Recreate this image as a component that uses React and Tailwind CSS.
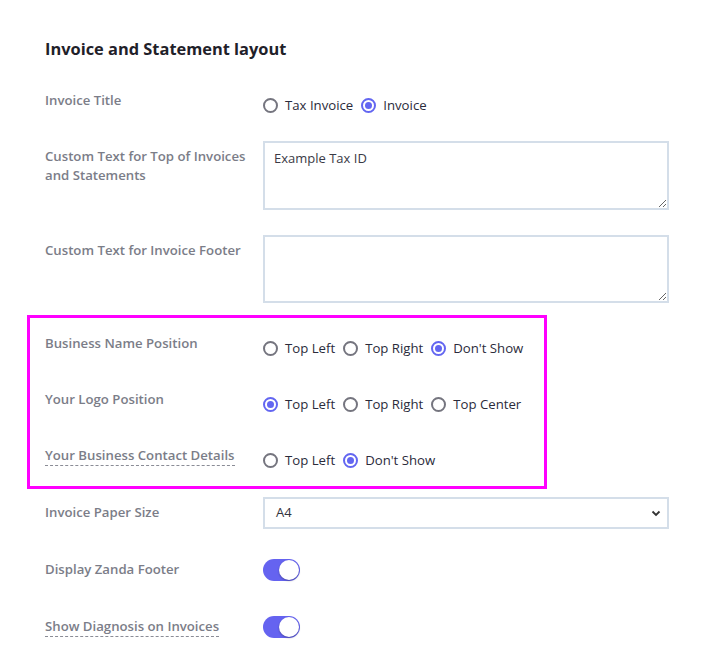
import React from "react";

const font = { fontFamily: "'Open Sans', 'Noto Sans', sans-serif" };

function Radio({ label, checked }) {
  return (
    <label className="flex items-center h-[19px] gap-[7px] mr-[8px]">
      {checked ? (
        <span className="w-[15px] h-[15px] rounded-full border-[2px] border-[#6366f1] flex items-center justify-center shrink-0">
          <span className="w-[7px] h-[7px] rounded-full bg-[#6366f1]" />
        </span>
      ) : (
        <span className="w-[15px] h-[15px] rounded-full border-[2px] border-[#75757f] shrink-0" />
      )}
      <span className="text-[13.2px] leading-[19px] text-[#2b2b3b]">{label}</span>
    </label>
  );
}

function Label({ children, dashed }) {
  return (
    <div className="w-[218px] shrink-0 pt-[6px] pr-[12px] text-[13.2px] leading-[19px] font-semibold text-[#7b7d88]">
      <span className={dashed ? "border-b border-dashed border-[#8a8c96] pb-[1px]" : ""}>
        {children}
      </span>
    </div>
  );
}

function RadioRow({ label, options, dashed }) {
  return (
    <div className="flex min-h-[31px]">
      <Label dashed={dashed}>{label}</Label>
      <div className="flex pt-[11px]">
        {options.map(([t, c]) => (
          <Radio key={t} label={t} checked={c} />
        ))}
      </div>
    </div>
  );
}

function Toggle() {
  return (
    <div className="w-[37px] h-[22px] rounded-full bg-[#6563f0] relative">
      <div className="absolute right-[1px] top-[1px] w-[20px] h-[20px] rounded-full bg-white shadow-[0_1px_2px_rgba(0,0,0,0.3)]" />
    </div>
  );
}

export default function App() {
  return (
    <div className="bg-white w-[704px] min-h-[663px] pl-[45px] pr-[35px] pt-[37px]" style={font}>
      <h2 className="text-[16.4px] leading-[24px] font-bold text-[#1f2129] mb-[24px]">
        Invoice and Statement layout
      </h2>
      <div className="flex flex-col gap-[25px]">
        <RadioRow label="Invoice Title" options={[["Tax Invoice", false], ["Invoice", true]]} />
        <div className="flex">
          <Label>Custom Text for Top of Invoices and Statements</Label>
          <textarea
            defaultValue="Example Tax ID"
            className="flex-1 h-[69px] border-[2px] border-[#d4dee9] px-[9px] py-[6px] text-[13px] leading-[19px] text-[#3a3a46] outline-none"
            style={font}
          />
        </div>
        <div className="flex">
          <Label>Custom Text for Invoice Footer</Label>
          <textarea
            className="flex-1 h-[68px] border-[2px] border-[#d4dee9] px-[9px] py-[6px] text-[13px] leading-[19px] text-[#3a3a46] outline-none"
            style={font}
          />
        </div>
        <div className="relative flex flex-col gap-[25px] mb-[1px]">
          <div className="absolute left-[-18px] top-[-13px] w-[520px] bottom-[-18px] border-[3px] border-[#ff00ff] pointer-events-none" />
          <RadioRow
            label="Business Name Position"
            options={[["Top Left", false], ["Top Right", false], ["Don't Show", true]]}
          />
          <RadioRow
            label="Your Logo Position"
            options={[["Top Left", true], ["Top Right", false], ["Top Center", false]]}
          />
          <RadioRow
            label="Your Business Contact Details"
            dashed
            options={[["Top Left", false], ["Don't Show", true]]}
          />
        </div>
        <div className="flex">
          <Label>Invoice Paper Size</Label>
          <div className="flex-1 h-[32px] border-[2px] border-[#d4dee9] flex items-center justify-between pl-[11px] pr-[6px]">
            <span className="text-[13px] text-[#33333d]">A4</span>
            <svg width="10" height="10" viewBox="0 0 10 10">
              <path d="M1.5 3.5 L5 7 L8.5 3.5" fill="none" stroke="#333" strokeWidth="1.8" />
            </svg>
          </div>
        </div>
        <div className="flex min-h-[32px]">
          <Label>Display Zanda Footer</Label>
          <div className="pt-[5px]">
            <Toggle />
          </div>
        </div>
        <div className="flex min-h-[32px]">
          <Label dashed>Show Diagnosis on Invoices</Label>
          <div className="pt-[5px]">
            <Toggle />
          </div>
        </div>
      </div>
    </div>
  );
}
